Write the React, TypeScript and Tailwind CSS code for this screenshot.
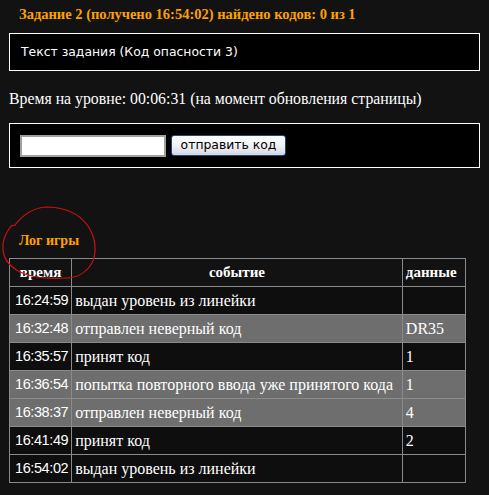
const rows = [
  { t: "16:24:59", e: "выдан уровень из линейки", d: "", light: false },
  { t: "16:32:48", e: "отправлен неверный код", d: "DR35", light: true },
  { t: "16:35:57", e: "принят код", d: "1", light: false },
  { t: "16:36:54", e: "попытка повторного ввода уже принятого кода", d: "1", light: true },
  { t: "16:38:37", e: "отправлен неверный код", d: "4", light: true },
  { t: "16:41:49", e: "принят код", d: "2", light: false },
  { t: "16:54:02", e: "выдан уровень из линейки", d: "", light: false },
];

export default function App() {
  return (
    <div className="relative min-h-[495px] w-[489px] bg-[#121212] text-white font-['Liberation_Serif',serif]">
      <div className="pl-[19px] pt-[5px] text-[14.5px] font-bold leading-[18px] text-[#ffa000]">
        Задание 2 (получено 16:54:02) найдено кодов: 0 из 1
      </div>

      <div className="mx-[9px] mt-[10px] flex h-[38px] items-center border border-white bg-black pl-[11px] font-['DejaVu_Sans',sans-serif] text-[12.4px]">
        Текст задания (Код опасности 3)
      </div>

      <div className="ml-[9px] mt-[19px] text-[15.8px] leading-[18px]">
        Время на уровне: 00:06:31 (на момент обновления страницы)
      </div>

      <div className="mx-[9px] mt-[15px] flex h-[45px] items-center gap-[5px] border border-white bg-black pl-[10px]">
        <input
          type="text"
          className="h-[22px] w-[146px] border-2 border-[#a0a0a0] bg-white"
        />
        <button className="h-[21px] w-[115px] rounded-[3px] border border-[#1c4a7c] bg-gradient-to-b from-white via-[#f2f2f6] to-[#d6d6e2] font-['DejaVu_Sans',sans-serif] text-[12.4px] leading-none text-black">
          отправить код
        </button>
      </div>

      <div className="pl-[19px] pt-[64px] text-[14px] font-bold leading-[18px] text-[#ffa000]">
        Лог игры
      </div>

      <table className="ml-[9px] mt-[8px] w-[457px] table-fixed border-collapse border border-[#8a8a8a] text-[16px]">
        <thead>
          <tr className="h-[28px]">
            <th className="w-[62px] border border-[#8a8a8a] px-[3px] text-center text-[15px] font-bold">время</th>
            <th className="w-[330px] border border-[#8a8a8a] px-[3px] text-center text-[15px] font-bold">событие</th>
            <th className="w-[63px] border border-[#8a8a8a] px-[3px] text-left text-[15px] font-bold">данные</th>
          </tr>
        </thead>
        <tbody>
          {rows.map((r) => (
            <tr key={r.t} className={`h-[28px] ${r.light ? "bg-[#6e6e6e]" : "bg-[#0e0e0e]"}`}>
              <td className="whitespace-nowrap border border-[#8a8a8a] pl-[5px] font-['Liberation_Sans',sans-serif] text-[14.5px] tracking-[-0.4px]">{r.t}</td>
              <td className="whitespace-nowrap border border-[#8a8a8a] px-[3px]">{r.e}</td>
              <td className="border border-[#8a8a8a] px-[3px]">{r.d}</td>
            </tr>
          ))}
        </tbody>
      </table>

      <svg className="pointer-events-none absolute left-0 top-0" width="120" height="300" viewBox="0 0 120 300" fill="none">
        <path
          d="M11 226 L15 225 C22 216 32 208 46 207 C62 207 78 212 88 226 C96 238 97 252 92 263 C86 273 76 278 66 278 C50 279 32 278 20 272 C8 266 2 256 3 244 C4 236 8 230 11 226 C13 225 15 225 16 225"
          stroke="#d01010"
          strokeWidth="1.2"
        />
      </svg>
    </div>
  );
}
